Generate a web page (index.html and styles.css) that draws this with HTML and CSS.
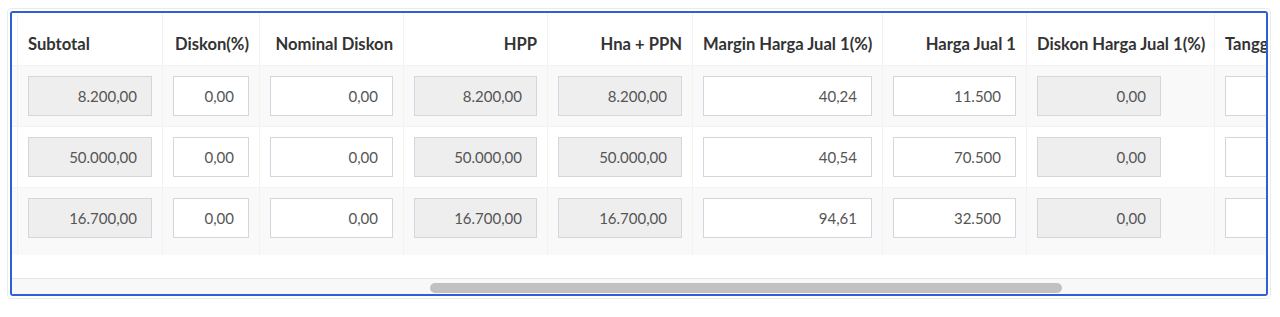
FILE: index.html
```html
<!DOCTYPE html>
<html lang="id">
<head>
<meta charset="utf-8">
<title>Tabel Harga</title>
<link rel="stylesheet" href="styles.css">
</head>
<body>
<div class="card">
  <div class="focus-box">
    <div class="viewport">
      <table class="grid">
        <thead>
          <tr>
            <th class="c-lead"></th>
            <th class="c-subtotal left">Subtotal</th>
            <th class="c-diskon">Diskon(%)</th>
            <th class="c-nominal">Nominal Diskon</th>
            <th class="c-hpp">HPP</th>
            <th class="c-hna">Hna + PPN</th>
            <th class="c-margin">Margin Harga Jual 1(%)</th>
            <th class="c-harga">Harga Jual 1</th>
            <th class="c-dhj">Diskon Harga Jual 1(%)</th>
            <th class="c-tgl left">Tanggal Kadaluarsa</th>
          </tr>
        </thead>
        <tbody>
          <tr class="odd">
            <td></td>
            <td><input class="field ro" value="8.200,00" readonly></td>
            <td><input class="field" value="0,00"></td>
            <td><input class="field" value="0,00"></td>
            <td><input class="field ro" value="8.200,00" readonly></td>
            <td><input class="field ro" value="8.200,00" readonly></td>
            <td><input class="field" value="40,24"></td>
            <td><input class="field" value="11.500"></td>
            <td><input class="field ro fixed" value="0,00" readonly></td>
            <td><input class="field" value=""></td>
          </tr>
          <tr>
            <td></td>
            <td><input class="field ro" value="50.000,00" readonly></td>
            <td><input class="field" value="0,00"></td>
            <td><input class="field" value="0,00"></td>
            <td><input class="field ro" value="50.000,00" readonly></td>
            <td><input class="field ro" value="50.000,00" readonly></td>
            <td><input class="field" value="40,54"></td>
            <td><input class="field" value="70.500"></td>
            <td><input class="field ro fixed" value="0,00" readonly></td>
            <td><input class="field" value=""></td>
          </tr>
          <tr class="odd last">
            <td></td>
            <td><input class="field ro" value="16.700,00" readonly></td>
            <td><input class="field" value="0,00"></td>
            <td><input class="field" value="0,00"></td>
            <td><input class="field ro" value="16.700,00" readonly></td>
            <td><input class="field ro" value="16.700,00" readonly></td>
            <td><input class="field" value="94,61"></td>
            <td><input class="field" value="32.500"></td>
            <td><input class="field ro fixed" value="0,00" readonly></td>
            <td><input class="field" value=""></td>
          </tr>
        </tbody>
      </table>
    </div>
    <div class="hscroll">
      <div class="thumb" style="margin-left:418px;width:632px"></div>
    </div>
  </div>
</div>
</body>
</html>
```
FILE: styles.css
```css
* { box-sizing: border-box; }

html, body {
  background: #ffffff;
}

body {
  margin: 8px 9px 0 7px;
  font-family: Lato, "Open Sans", "Liberation Sans", sans-serif;
  color: #333333;
}

.card {
  border: 1px solid #ebebeb;
  border-radius: 4px;
  padding: 2px;
}

.focus-box {
  border: 2px solid #2c60d6;
  border-radius: 3px;
  display: flex;
  flex-direction: column;
  overflow: hidden;
}

.viewport {
  height: 265px;
  overflow: hidden;
  background: #ffffff;
}

.grid {
  border-collapse: separate;
  border-spacing: 0;
  table-layout: fixed;
  width: 1402px;
}

.grid th,
.grid td {
  border-right: 1px solid #f2f2f2;
  padding: 10px;
}

.grid th {
  height: 52px;
  vertical-align: bottom;
  text-align: right;
  font-size: 16.6px;
  font-weight: 700;
  line-height: 22px;
  color: #333333;
  white-space: nowrap;
  overflow: hidden;
  padding-bottom: 10px;
}

.grid th.left { text-align: left; }

.grid td {
  border-top: 1px solid #f2f2f2;
  vertical-align: top;
}

.grid tr.odd td { background: #f9f9f9; }
.grid tr.last td { padding-bottom: 17px; }

.c-lead { width: 6px; padding: 0 !important; }
.c-subtotal { width: 145px; }
.c-diskon { width: 97px; }
.c-nominal { width: 144px; }
.c-hpp { width: 144px; }
.c-hna { width: 145px; }
.c-margin { width: 190px; }
.c-harga { width: 144px; }
.c-dhj { width: 188px; }
.c-tgl { width: 205px; }

.field {
  display: block;
  width: 100%;
  height: 40px;
  margin: 0;
  border: 1px solid #d2d6de;
  border-radius: 0;
  background: #ffffff;
  color: #555555;
  font-family: Lato, "Open Sans", "Liberation Sans", sans-serif;
  font-size: 15px;
  text-align: right;
  padding: 0 14px 0 10px;
  outline: none;
}

.field.ro { background: #eeeeee; }
.field.fixed { width: 124px; }

.hscroll {
  height: 16px;
  border-top: 1px solid #e6e6e6;
  background: #f8f8f8;
  padding-top: 4px;
  display: flex;
}

.thumb {
  height: 10px;
  border-radius: 5px;
  background: #c1c1c1;
}
```
